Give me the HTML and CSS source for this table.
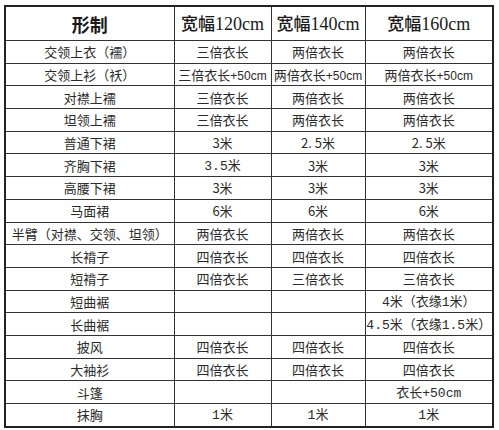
FILE: index.html
```html
<!DOCTYPE html>
<html lang="zh">
<head>
<meta charset="utf-8">
<title>汉服用料表</title>
<link rel="stylesheet" href="styles.css">
</head>
<body>
<table class="sheet">
  <colgroup>
    <col class="c1"><col class="c2"><col class="c3"><col class="c4">
  </colgroup>
  <thead>
    <tr class="head">
      <th class="title">形制</th>
      <th>宽幅<span class="lat">120cm</span></th>
      <th>宽幅<span class="lat">140cm</span></th>
      <th>宽幅<span class="lat">160cm</span></th>
    </tr>
  </thead>
  <tbody>
    <tr><td>交领上衣（襦）</td><td>三倍衣长</td><td>两倍衣长</td><td>两倍衣长</td></tr>
    <tr><td>交领上衫（袄）</td><td>三倍衣长<span class="sm">+50cm</span></td><td>两倍衣长<span class="sm">+50cm</span></td><td>两倍衣长<span class="sm">+50cm</span></td></tr>
    <tr><td>对襟上襦</td><td>三倍衣长</td><td>两倍衣长</td><td>两倍衣长</td></tr>
    <tr><td>坦领上襦</td><td>三倍衣长</td><td>两倍衣长</td><td>两倍衣长</td></tr>
    <tr><td>普通下裙</td><td>3米</td><td>2.&nbsp;5米</td><td>2.&nbsp;5米</td></tr>
    <tr><td>齐胸下裙</td><td><span class="mono">3.5</span>米</td><td>3米</td><td>3米</td></tr>
    <tr><td>高腰下裙</td><td>3米</td><td>3米</td><td>3米</td></tr>
    <tr><td>马面裙</td><td>6米</td><td>6米</td><td>6米</td></tr>
    <tr><td>半臂（对襟、交领、坦领）</td><td>两倍衣长</td><td>两倍衣长</td><td>两倍衣长</td></tr>
    <tr><td>长褙子</td><td>四倍衣长</td><td>四倍衣长</td><td>四倍衣长</td></tr>
    <tr><td>短褙子</td><td>四倍衣长</td><td>三倍衣长</td><td>三倍衣长</td></tr>
    <tr><td>短曲裾</td><td></td><td></td><td><span class="mono">4</span>米（衣缘<span class="mono">1</span>米）</td></tr>
    <tr><td>长曲裾</td><td></td><td></td><td><span class="mono">4.5</span>米（衣缘<span class="mono">1.5</span>米）</td></tr>
    <tr><td>披风</td><td>四倍衣长</td><td>四倍衣长</td><td>四倍衣长</td></tr>
    <tr><td>大袖衫</td><td>四倍衣长</td><td>四倍衣长</td><td>四倍衣长</td></tr>
    <tr><td>斗篷</td><td></td><td></td><td>衣长<span class="mono">+50cm</span></td></tr>
    <tr><td>抹胸</td><td><span class="mono">1</span>米</td><td><span class="mono">1</span>米</td><td><span class="mono">1</span>米</td></tr>
  </tbody>
</table>
</body>
</html>
```

FILE: styles.css
```css
html, body {
  margin: 0;
  padding: 0;
  background: #ffffff;
}

body {
  padding: 5px 0 0 4px;
  font-family: "Noto Sans CJK SC", "Liberation Sans", sans-serif;
  color: #262626;
}

.sheet {
  border-collapse: collapse;
  table-layout: fixed;
  width: 488px;
  border: 2px solid #222;
}

.c1 { width: 169px; }
.c2 { width: 97px; }
.c3 { width: 94px; }
.c4 { width: 128px; }

.sheet th,
.sheet td {
  border: 1px solid #333;
  padding: 0;
  text-align: center;
  vertical-align: middle;
  white-space: nowrap;
  overflow: hidden;
}

.head th {
  height: 33px;
  font-size: 17px;
  font-weight: 500;
  color: #1a1a1a;
  line-height: 1;
}

.head .title {
  font-size: 18px;
  font-weight: 700;
}

.lat {
  font-family: "Liberation Serif", serif;
  font-size: 18px;
}

.sheet td {
  height: 21.7px;
  font-size: 13px;
  line-height: 1;
  color: #2a2a2a;
}

.sm {
  font-family: "Liberation Sans", sans-serif;
  font-size: 12px;
}

.mono {
  font-family: "Liberation Mono", monospace;
  font-size: 13px;
}
```
